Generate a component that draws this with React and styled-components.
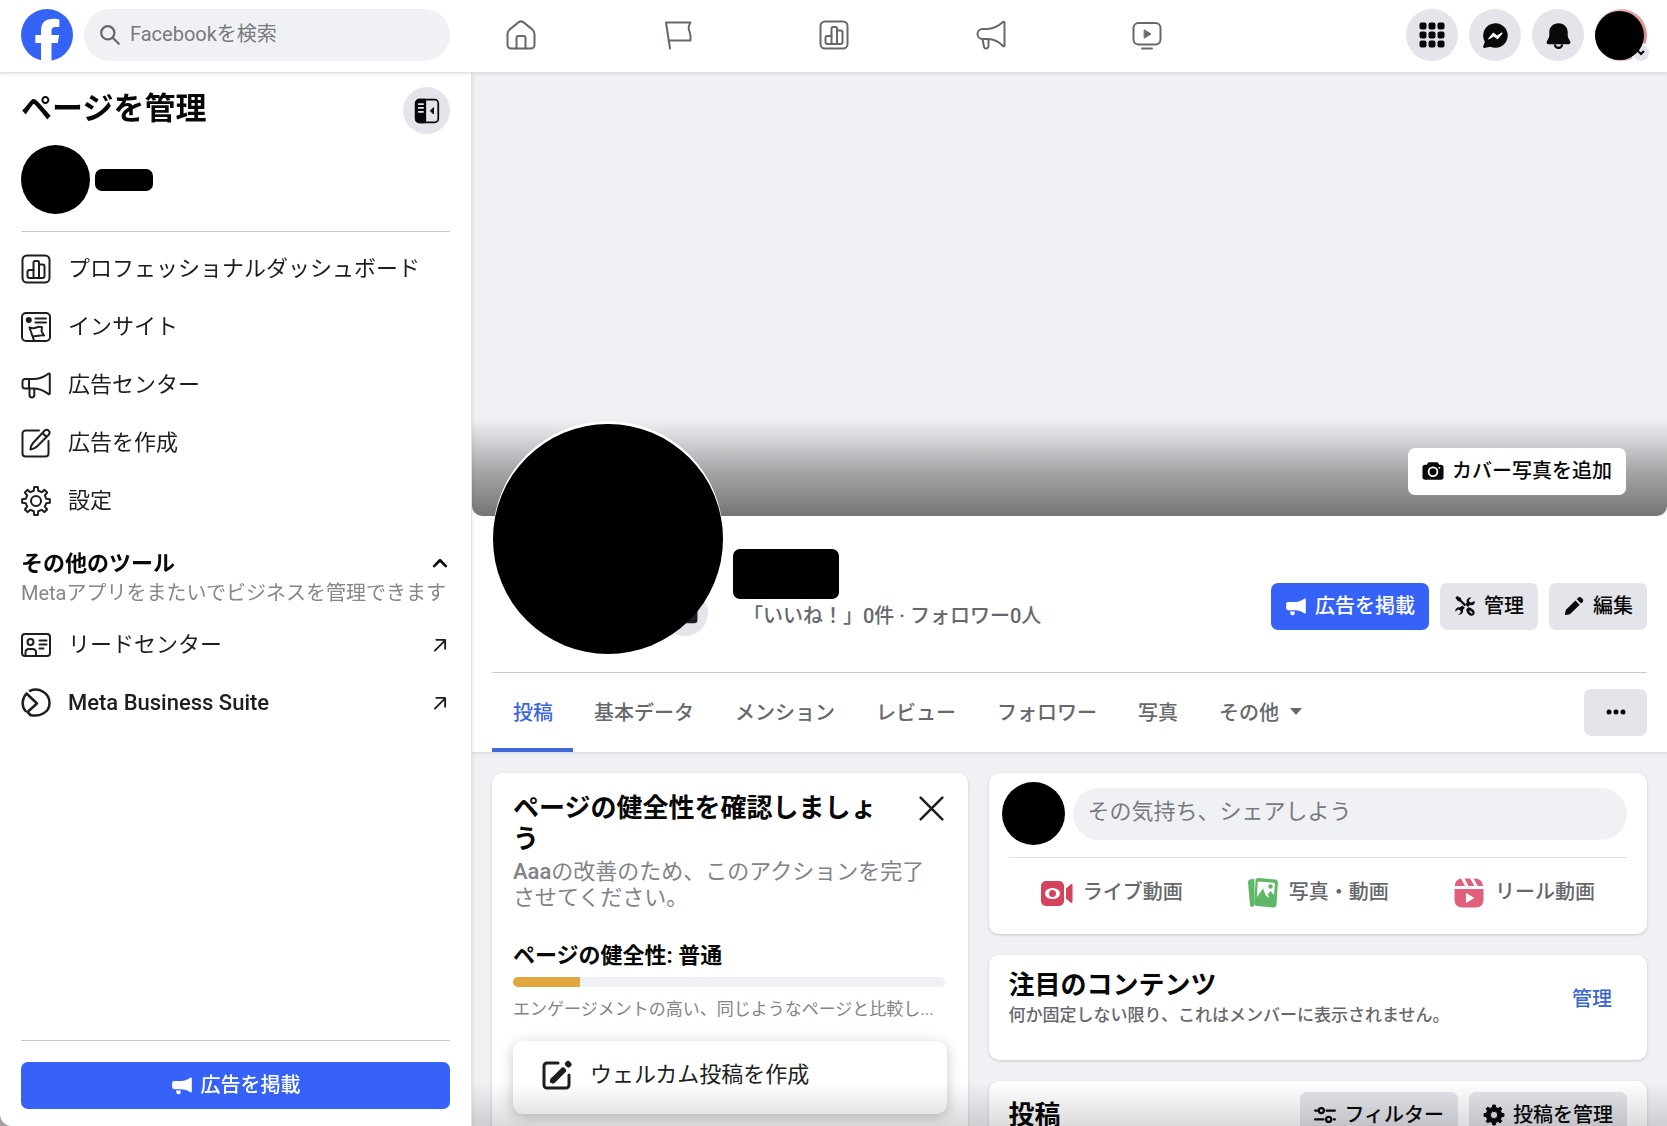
import React from 'react'
import styled, { createGlobalStyle } from 'styled-components'

const GlobalStyle = createGlobalStyle`
  * {
    box-sizing: border-box;
  }

  html {
    background: #a79f9b;
  }

  body {
    margin: 0;
    font-family: Roboto, "Noto Sans CJK JP", sans-serif;
    font-size: 20px;
    color: #080809;
  }

  button, input {
    font: inherit;
    color: inherit;
  }

  button {
    border: 0;
    padding: 0;
    background: none;
    cursor: pointer;
  }

  a {
    color: inherit;
    text-decoration: none;
  }

  h1, h2, h3, p, ul {
    margin: 0;
    padding: 0;
    font-weight: inherit;
  }

  svg {
    display: block;
    flex: none;
  }
`

/* ---------- Icons ---------- */

const Line = ({ size = 30, width = 2, children }) => (
    <svg width={size} height={size} viewBox="0 0 30 30" fill="none" stroke="currentColor" strokeWidth={width} strokeLinecap="round" strokeLinejoin="round" aria-hidden="true">
        {children}
    </svg>
)

const Solid = ({ size = 22, children }) => (
    <svg width={size} height={size} viewBox="0 0 24 24" fill="currentColor" aria-hidden="true">
        {children}
    </svg>
)

// outline of a cog, centred on c
const gear = (c, outer, inner, teeth = 8) => {
    const step = (Math.PI * 2) / teeth
    const points = []
    for (let i = 0; i < teeth; i++) {
        const a = i * step - Math.PI / 2
        const corners = [[inner, -0.27], [outer, -0.17], [outer, 0.17], [inner, 0.27]]
        corners.forEach(([r, t]) => {
            points.push(`${(c + r * Math.cos(a + t * step)).toFixed(2)} ${(c + r * Math.sin(a + t * step)).toFixed(2)}`)
        })
    }
    return `M${points.join('L')}Z`
}

const FacebookLogo = () => (
    <svg width="52" height="52" viewBox="0 0 52 52" aria-hidden="true">
        <circle cx="26" cy="26" r="26" fill="#3563f6" />
        <path fill="#fff" d="M20 52V34h-5.700V26H20v-3.500C20 13.500 24 9.800 32.500 9.800c2 0 4.500.2 5.800.7V18c-.8-.1-2-.1-3.500-.1-3.600 0-4.300 1.500-4.300 4.800V26h7.700l-1.500 8h-6.200v18z" />
    </svg>
)

const SearchIcon = () => (
    <Line size={22} width={3}>
        <circle cx="12" cy="12" r="9" />
        <path d="M19 19l8 8" />
    </Line>
)

const HomeIcon = () => (
    <Line>
        <path d="M1.500 14c0-2 .8-3.400 2.200-4.600l8.700-7c1.600-1.300 3.600-1.300 5.200 0l8.700 7c1.400 1.200 2.200 2.600 2.200 4.600v11a3.500 3.500 0 0 1-3.500 3.500H5A3.500 3.500 0 0 1 1.500 25z" />
        <path d="M10.500 28.500V18a2 2 0 0 1 2-2h5a2 2 0 0 1 2 2v10.500" />
    </Line>
)

const FlagIcon = () => (
    <Line>
        <path d="M7 28.500L3 2.500h24.500c-2.200 3.200-2.500 5.500-1 9 1 2.800 1.600 5 1 9H5.800" />
    </Line>
)

const ChartIcon = () => (
    <Line>
        <rect x="1.500" y="1.500" width="27" height="27" rx="4.500" />
        <path d="M12.500 24H8.500a2 2 0 0 1-2-2v-4a2 2 0 0 1 2-2h4" />
        <path d="M12.500 24V8.500a1.500 1.500 0 0 1 1.500-1.500h2.500a1.500 1.500 0 0 1 1.500 1.500V24z" />
        <path d="M18 10.500h3.500a2 2 0 0 1 2 2V22a2 2 0 0 1-2 2H18" />
    </Line>
)

const MegaphoneIcon = ({ band }) => (
    <Line>
        {band ? (
            <>
                <path d="M4 9h8c6 0 11-2 15.300-5.300.8-.6 1.500-.3 1.500.7v18.800c0 1-.8 1.300-1.500.7C23 20.500 18 18.500 12 18.500H4A2.500 2.500 0 0 1 1.500 16v-4.500A2.500 2.500 0 0 1 4 9z" />
                <path d="M8 9v9.500M8.500 18.500V25a2.400 2.400 0 0 0 4.800 0v-6.300" />
            </>
        ) : (
            <>
                <path d="M6.500 9H11c7 0 12-3.500 16-7 .8-.6 1.500-.3 1.500.6v22.800c0 1-.8 1.300-1.500.6-3.500-3.500-8.500-7-15-7H6.500a5 5 0 0 1 0-10z" />
                <path d="M6.500 19l1.400 7.300a2.300 2.300 0 0 0 4.600-.3v-7" />
            </>
        )}
    </Line>
)

const VideoIcon = () => (
    <Line>
        <rect x="1.500" y="3" width="27" height="21.500" rx="5" />
        <path d="M10 28.500h10" />
        <path d="M12.500 10l6.500 4-6.500 4z" fill="currentColor" strokeWidth="1" />
    </Line>
)

const InsightIcon = () => (
    <Line>
        <rect x="1" y="1" width="28" height="28" rx="4" />
        <circle cx="7.800" cy="8" r="2" fill="currentColor" />
        <path d="M14.500 6.500H25M14.500 10.500H25M13 28.500L8.500 15.500c3 1 5 .8 7 0s3.500-1 5.500-.2l-.5 4 2.500 4.200c-4-1-7 1.500-11.500.5" />
    </Line>
)

const ComposeIcon = () => (
    <Line>
        <path d="M18 2.500H4.500a3 3 0 0 0-3 3v20a3 3 0 0 0 3 3h20a3 3 0 0 0 3-3V13" />
        <path d="M9.500 21.500c0-3 .8-4.500 2.500-6.500L23.500 2.800c1.200-1.200 3-1.200 4.200 0s1 2.800 0 4L16 18.500c-2 1.900-3.700 2.700-6.500 3zM21.500 5l4 4" />
    </Line>
)

const GearIcon = () => (
    <Line>
        <path d={gear(15, 14, 10.500)} />
        <circle cx="15" cy="15" r="5" />
    </Line>
)

const LeadIcon = () => (
    <Line>
        <rect x="1" y="4" width="28" height="22" rx="3" />
        <circle cx="9.500" cy="12" r="3" />
        <path d="M4.500 25.500v-3c0-2 1.500-3.500 3.500-3.500h3.500c2 0 3.500 1.500 3.500 3.500v3M18.500 10.500h7M18.500 14.500h7M18.500 18.500h4" />
    </Line>
)

const SuiteIcon = () => (
    <Line width={2.500}>
        <path d="M9 2.800C18 -1 28.500 5 28.500 15S18 29 9.500 27" />
        <path d="M9.500 27l-3-3L16 15.500 5.500 5.500C.5 11 .5 18.500 4.500 23" />
    </Line>
)

const PanelIcon = () => (
    <Line size={26} width={2}>
        <rect x="2" y="2" width="26" height="26" rx="4" />
        <path d="M13 2H6a4 4 0 0 0-4 4v18a4 4 0 0 0 4 4h7z" fill="currentColor" />
        <path d="M5.500 7h5M5.500 11.500h5M5.500 16h5" stroke="#e4e6eb" />
        <path d="M22.500 11.500v7l-3.500-3.500z" fill="currentColor" strokeWidth="1" />
    </Line>
)

const ArrowIcon = () => (
    <Line size={14} width={4}>
        <path d="M4 27L26 5M7 4h19v19" />
    </Line>
)

const ChevronUp = () => (
    <Line size={16} width={5}>
        <path d="M4 19L15 8l11 11" />
    </Line>
)

const CloseIcon = () => (
    <Line size={25} width={3}>
        <path d="M2 2l26 26M28 2L2 28" />
    </Line>
)

const MenuDots = () => (
    <svg width="26" height="26" viewBox="0 0 26 26" aria-hidden="true">
        {[0, 9, 18].map((y) => [0, 9, 18].map((x) => (
            <rect key={`${x}-${y}`} x={x + 0.500} y={y + 0.500} width="7" height="7" rx="2" fill="currentColor" />
        )))}
    </svg>
)

const MessengerIcon = () => (
    <Solid size={27}>
        <path d="M12 1a11 11 0 1 1-4.500 21.100L2 23c-.8.100-1.200-.5-.9-1.200L2.500 17.500A11 11 0 0 1 12 1z" />
        <path d="M6 15l4-5 3.300 2.600L17.800 9.800l-4 5-3.300-2.600z" fill="#fff" stroke="#fff" strokeLinejoin="round" />
    </Solid>
)

const BellIcon = () => (
    <Solid size={27}>
        <path d="M12 1c-5 0-8.200 3.600-8.200 8v3.200c0 .8-.3 1.700-.8 2.500l-1.400 2.600c-.6 1.200.2 2.400 1.500 2.400h17.800c1.300 0 2.100-1.200 1.500-2.400L21 14.700c-.5-.8-.8-1.700-.8-2.500V9c0-4.400-3.200-8-8.200-8z" />
        <path d="M8.800 20a3.200 3 0 0 0 6.400 0" fill="none" stroke="currentColor" strokeWidth="2" />
    </Solid>
)

const AdIcon = () => (
    <Solid>
        <path d="M3.500 7.500H11c4 0 7-1.200 10-3.400.8-.6 1.700-.1 1.700.8v14.200c0 .9-.9 1.400-1.700.8-3-2.200-6-3.400-10-3.400H3.500A2.300 2.300 0 0 1 1.200 14.200V9.800A2.300 2.300 0 0 1 3.500 7.500z" />
        <path d="M5.500 18h5v2.200a1.800 1.800 0 0 1-1.800 1.800H7.800a2 2 0 0 1-1.900-1.500z" />
    </Solid>
)

const CameraIcon = ({ size }) => (
    <Solid size={size}>
        <path fillRule="evenodd" d="M8 2.500h8c1 0 1.600.5 2 1.300l.7 1.400h1.800A3 3 0 0 1 23.500 8.200v10.300a3 3 0 0 1-3 3h-17a3 3 0 0 1-3-3V8.200a3 3 0 0 1 3-3h1.800L6 3.800c.4-.8 1-1.300 2-1.300zM12 7a5.800 5.800 0 1 0 0 11.600A5.800 5.800 0 0 0 12 7zm0 2a3.800 3.800 0 1 1 0 7.600A3.800 3.800 0 0 1 12 9zm7-1.500a1 1 0 1 0 0 2 1 1 0 0 0 0-2z" />
    </Solid>
)

const ToolsIcon = () => (
    <Solid>
        <path d="M1.500 3l2-2 4 2.200.8 2.400 5 5-1.700 1.700-5-5-2.500-.8z" />
        <path d="M22.700 6.500c.5 3.500-2.500 5.500-5.500 4.600l-2 2-3-3 1.800-1.800c-1-3.300 1.500-6.300 5-5.600l-2.700 2.800.5 2.200 2.200.6z" />
        <path d="M1.500 18c-.5-3.500 2.500-5.300 5.300-4.600l2.400-2 2.600 2.600-2 2.200c.8 3.200-1.800 5.800-5 5.300l2.700-2.700-.7-2.200-2.300-.8z" />
        <path fillRule="evenodd" d="M13.500 15.500l2.200-2.200c2 .2 3.500 1 5 2.500 2 2 2.500 4 1 5.700s-4 1.300-6-.6c-1.500-1.500-2.300-3.200-2.200-5.400zm4 1l3 3.200-1 .9-3-3z" />
    </Solid>
)

const PencilIcon = () => (
    <Solid>
        <path d="M3 21.800c-.6.100-1-.3-.9-.9l.9-4.500L13.500 6l4.700 4.700L7.600 21.100z" />
        <path d="M15 4.600l1.300-1.300c1.300-1.300 2.800-1.300 4-.1l.9.9c1.200 1.200 1.200 2.700-.1 4l-1.300 1.300z" />
    </Solid>
)

const WelcomeIcon = () => (
    <Line width={3}>
        <path d="M16 3H5a3 3 0 0 0-3 3v19a3 3 0 0 0 3 3h19a3 3 0 0 0 3-3V15" />
        <path d="M11 20.500L21 10.500" strokeWidth="6" />
        <path d="M9 22l1.500-4 2.500 2.500z" fill="currentColor" strokeWidth="2" />
        <path d="M26 4l.5.5" strokeWidth="6" />
    </Line>
)

const FilterIcon = () => (
    <Line size={22} width={3}>
        <circle cx="10" cy="9" r="3.500" />
        <circle cx="20" cy="21" r="3.500" />
        <path d="M1.500 9h3M17 9h11.500M1.500 21H13M27 21h1.500" />
    </Line>
)

const GearSolid = () => (
    <Solid>
        <path fillRule="evenodd" stroke="currentColor" strokeLinejoin="round" d={`${gear(12, 11, 8.500)}M12 8a4 4 0 1 0 0 8 4 4 0 0 0 0-8z`} />
    </Solid>
)

const LiveIcon = () => (
    <svg width="32" height="32" viewBox="0 0 32 32" fill="#d5435b" aria-hidden="true">
        <rect x="0" y="4" width="23" height="25" rx="5" />
        <path d="M25 11.500l4.500-4c1-.8 2-.3 2 1v16c0 1.300-1 1.800-2 1l-4.500-4z" />
        <ellipse cx="11.500" cy="16.500" rx="7.500" ry="5.500" fill="#fff" />
        <circle cx="11.500" cy="16.500" r="3.500" />
    </svg>
)

const PhotoIcon = () => (
    <svg width="32" height="32" viewBox="0 0 32 32" fill="#5fb868" aria-hidden="true">
        <path d="M1 5.500C1 3.500 2 2.500 4 2.300L7.500 2v26.500l-1.800 1.300c-1.500.5-2.500 0-2.700-2z" />
        <path d="M11.500 1l16.500 1.500c2 .2 3 1.200 2.900 3.200L29.500 27.500c-.2 2-1.200 3-3.200 2.900L10 29c-2-.2-2.800-1.200-2.700-3.200L8.500 4c.1-2 1-3.100 3-3z" />
        <path d="M11.500 4.500l15 1.200c1 .1 1.400.6 1.300 1.600L27 18l-3.500-4-2.700 3.500 1.500 3.500-3.500-2.500L16 11.500 10 20l.6-14.500c0-.7.3-1 .9-1z" fill="#fff" />
        <circle cx="23.500" cy="9.500" r="2.200" />
    </svg>
)

const ReelIcon = () => (
    <svg width="32" height="32" viewBox="0 0 32 32" fill="#e0607c" aria-hidden="true">
        <path d="M2 9c0-4.500 2.500-7 6-7.500L12 9zM11.500 1.500h5.500L21.500 9h-6zM20.500 1.500h2c4.500.5 7 3 7.500 7.500h-5.200z" />
        <path fillRule="evenodd" d="M1.500 12h29v10.500c0 5-3 8-8 8h-13c-5 0-8-3-8-8zM13 16v10l8.500-5z" />
    </svg>
)

/* ---------- Shell ---------- */

const Window = styled.div`
    height: 100vh;
    display: flex;
    flex-direction: column;
    overflow: hidden;
    background: #fff;
    border-bottom-left-radius: 12px;
`

const Header = styled.header`
    position: relative;
    z-index: 3;
    display: grid;
    grid-template-columns: 1fr minmax(0, 656px) 1fr;
    align-items: center;
    height: 73px;
    padding: 0 20px 2px 21px;
    flex: none;
    background: #fff;
    border-bottom: 1px solid #dfe1e4;
    box-shadow: 0 1px 3px rgba(0, 0, 0, 0.1);
`

const Brand = styled.div`
    display: flex;
    align-items: center;
    gap: 11px;
`

const SearchBox = styled.label`
    display: flex;
    align-items: center;
    gap: 8px;
    width: 366px;
    height: 52px;
    padding: 0 15px;
    border-radius: 26px;
    background: #f0f1f5;
    color: #65686c;
`

const SearchInput = styled.input`
    flex: 1;
    min-width: 0;
    border: 0;
    outline: 0;
    padding: 0 0 2px 1px;
    background: none;

    &::placeholder {
        color: #777a7e;
        opacity: 1;
    }
`

const TopNav = styled.nav`
    display: flex;
    justify-content: space-between;
    color: #65686c;
`

const HeaderTools = styled.div`
    display: flex;
    justify-content: flex-end;
    gap: 11px;
`

const RoundButton = styled.button`
    display: flex;
    align-items: center;
    justify-content: center;
    width: ${(p) => p.$size || 52}px;
    height: ${(p) => p.$size || 52}px;
    border-radius: 50%;
    background: #e4e5eb;
    flex: none;
`

const AccountButton = styled(RoundButton)`
    position: relative;
    justify-content: flex-start;
    background: linear-gradient(100deg, #f3d4d1, #d88a86);
`

const AccountBadge = styled.span`
    position: absolute;
    right: -2px;
    bottom: 0;
    display: flex;
    align-items: flex-end;
    justify-content: center;
    width: 16px;
    height: 16px;
    padding-bottom: 5px;
    border-radius: 50%;
    background: #e4e5eb;
    box-shadow: 0 0 0 2px #fff;
`

const Avatar = styled.span`
    position: relative;
    width: ${(p) => p.$size}px;
    height: ${(p) => p.$size}px;
    border-radius: 50%;
    background: #000;
    flex: none;
`

const Redacted = styled.span`
    display: block;
    width: ${(p) => p.$w}px;
    height: ${(p) => p.$h}px;
    border-radius: 7px;
    background: #000;
`

const Body = styled.div`
    display: flex;
    flex: 1;
    min-height: 0;
`

/* ---------- Sidebar ---------- */

const Sidebar = styled.aside`
    position: relative;
    z-index: 2;
    display: flex;
    flex-direction: column;
    width: 472px;
    flex: none;
    padding: 14px 21px 17px;
    border-right: 1px solid #dfe1e4;
    box-shadow: 1px 0 3px rgba(0, 0, 0, 0.08);
`

const SidebarHead = styled.div`
    display: flex;
    align-items: center;
    justify-content: space-between;
`

const PageTitle = styled.h1`
    padding-bottom: 3px;
    font-size: 31px;
    line-height: 44px;
    font-weight: 700;
`

const PageOwner = styled.div`
    display: flex;
    align-items: center;
    gap: 5px;
    margin-top: 11px;
    padding-bottom: 17px;
    border-bottom: 1px solid #c9ccd1;
`

const MenuList = styled.ul`
    list-style: none;
    padding-top: ${(p) => p.$top}px;
`

const MenuLink = styled.a`
    display: flex;
    align-items: center;
    gap: 17px;
    height: 58px;
    padding-right: 3px;
    font-size: 22px;
    line-height: 30px;
    color: #1c1e21;

    span {
        flex: 1;
        padding-bottom: 1px;
        font-weight: ${(p) => (p.$latin ? 500 : 400)};
    }
`

const ToolsToggle = styled.button`
    display: flex;
    align-items: center;
    justify-content: space-between;
    margin-top: 20px;
    padding-right: 2px;
    font-size: 22px;
    line-height: 28px;
    font-weight: 700;
`

const ToolsNote = styled.p`
    margin-top: 2px;
    line-height: 26px;
    white-space: nowrap;
    color: #85878b;
`

const SidebarFoot = styled.div`
    margin-top: auto;
    padding-top: 21px;
    border-top: 1px solid #c9ccd1;
`

const Button = styled.button`
    display: flex;
    align-items: center;
    justify-content: center;
    gap: 8px;
    width: ${(p) => (p.$wide ? '100%' : 'auto')};
    height: 47px;
    padding: 0 14px 2px;
    border-radius: 7px;
    line-height: 26px;
    font-weight: 500;
    white-space: nowrap;
    color: ${(p) => (p.$primary ? '#fff' : '#080809')};
    background: ${(p) => (p.$primary ? '#3662f8' : p.$white ? '#fff' : '#e4e5eb')};
`

/* ---------- Page header ---------- */

const Main = styled.main`
    position: relative;
    flex: 1;
    min-width: 0;
    overflow-y: auto;
    scrollbar-width: none;
    background: #f0f1f5;
`

const PageHead = styled.section`
    background: #fff;
    border-bottom: 1px solid #dfe1e4;
    box-shadow: 0 1px 2px rgba(0, 0, 0, 0.08);
`

const Cover = styled.div`
    display: flex;
    align-items: flex-end;
    justify-content: flex-end;
    height: 443px;
    padding: 21px 41px;
    border-radius: 0 0 10px 10px;
    background: linear-gradient(to top, #767475, #a5a6a8 45px, #d8d9dc 80px, #f0f1f5 98px);
`

const Profile = styled.div`
    display: flex;
    align-items: flex-start;
    gap: 10px;
    margin: 0 20px;
    padding-bottom: 18px;
    border-bottom: 1px solid #c9ccd1;
`

const Portrait = styled.div`
    position: relative;
    margin-top: -92px;
    margin-left: 1px;
    flex: none;
    display: flex;

    ${Avatar} {
        box-shadow: 0 -3px 0 #fff;
    }
`

const PortraitButton = styled(RoundButton)`
    position: absolute;
    right: 15px;
    bottom: 18px;
    color: #1c1e21;
`

const ProfileText = styled.div`
    flex: 1;
    padding-top: 33px;
`

const Stats = styled.p`
    margin-top: 4px;
    padding-left: 10px;
    line-height: 26px;
    font-weight: 500;
    color: #65686c;
`

const Actions = styled.div`
    display: flex;
    gap: 11px;
    padding-top: ${(p) => p.$top || 0}px;
`

const TabBar = styled.nav`
    display: flex;
    align-items: stretch;
    height: 79px;
    margin: 0 20px;
`

const Tab = styled.a`
    display: flex;
    align-items: center;
    gap: 11px;
    padding: 0 20px 2px 21px;
    border-top: 4px solid transparent;
    border-bottom: 4px solid ${(p) => (p.$active ? '#4267d8' : 'transparent')};
    font-weight: 500;
    white-space: nowrap;
    color: ${(p) => (p.$active ? '#3b66dd' : '#65686c')};
`

const MoreButton = styled(Button)`
    width: 63px;
    margin: auto 0 auto auto;
`

const Caret = styled.span`
    width: 0;
    border: 6px solid transparent;
    border-top: 7px solid #65686c;
    border-bottom: 0;
`

/* ---------- Feed ---------- */

const Feed = styled.div`
    display: grid;
    grid-template-columns: 476fr 659fr;
    align-items: start;
    gap: 21px;
    padding: 20px;
`

const Column = styled.div`
    display: flex;
    flex-direction: column;
    gap: 21px;
    min-width: 0;
`

const Card = styled.section`
    padding: ${(p) => p.$pad || '20px'};
    border-radius: 10px;
    background: #fff;
    box-shadow: 0 1px 3px rgba(0, 0, 0, 0.18);
`

const CardHead = styled.div`
    display: flex;
    align-items: ${(p) => (p.$top ? 'flex-start' : 'center')};
    justify-content: space-between;
    gap: 20px;
`

const CardTitle = styled.h2`
    font-size: 26px;
    line-height: 31px;
    font-weight: 700;
`

const CloseButton = styled.button`
    padding: 3px 3px 0 0;
    color: #1c1e21;
`

const HealthText = styled.p`
    margin-top: 4px;
    padding-right: 10px;
    font-size: 22px;
    line-height: 26px;
    color: #808387;

    b {
        font-weight: 500;
    }
`

const HealthLevel = styled.h3`
    margin-top: 30px;
    font-size: 22px;
    line-height: 30px;
    font-weight: 700;
`

const Meter = styled.div`
    height: 10px;
    margin: 6px 2px 0 0;
    overflow: hidden;
    border-radius: 5px;
    background: #f0f1f5;
`

const MeterFill = styled.div`
    height: 100%;
    background: #e2a63f;
`

const HealthNote = styled.p`
    margin-top: 10px;
    font-size: 17px;
    line-height: 24px;
    white-space: nowrap;
    color: #808387;
`

const TaskButton = styled.button`
    display: flex;
    align-items: center;
    gap: 18px;
    width: 100%;
    height: 73px;
    margin: 20px 0 40px;
    padding: 0 29px 6px;
    border-radius: 10px;
    background: #fff;
    box-shadow: 0 3px 14px rgba(0, 0, 0, 0.22);
    font-size: 22px;
    line-height: 28px;
    color: #1c1e21;
`

const Composer = styled.div`
    display: flex;
    align-items: center;
    gap: 8px;
    margin-left: -7px;
    padding-bottom: 12px;
`

const ComposerInput = styled.input`
    flex: 1;
    min-width: 0;
    height: 52px;
    padding: 0 15px 4px;
    border: 0;
    border-radius: 26px;
    background: #f0f1f5;
    font-size: 22px;

    &::placeholder {
        color: #777a7e;
        opacity: 1;
    }
`

const PostKinds = styled.div`
    display: grid;
    grid-template-columns: repeat(3, 1fr);
    padding-top: 10px;
    border-top: 1px solid #dfe1e4;
`

const PostKind = styled.button`
    display: flex;
    align-items: center;
    justify-content: center;
    gap: 10px;
    height: 52px;
    padding-bottom: 2px;
    line-height: 26px;
    font-weight: 500;
    color: #65686c;

    span {
        padding-bottom: 2px;
    }
`

const PinNote = styled.p`
    font-size: 17px;
    line-height: 28px;
    font-weight: 500;
    color: #65686c;
`

const PinManage = styled.a`
    padding: 0 15px 2px 0;
    line-height: 26px;
    font-weight: 500;
    color: #3b66cf;
`

const BottomShade = styled.div`
    position: fixed;
    left: 472px;
    right: 0;
    bottom: 0;
    height: 44px;
    pointer-events: none;
    background: linear-gradient(to top, rgba(0, 0, 0, 0.14), rgba(0, 0, 0, 0));
`

const navItems = [
    { label: 'ホーム', icon: <HomeIcon /> },
    { label: 'ページ', icon: <FlagIcon /> },
    { label: 'ダッシュボード', icon: <ChartIcon /> },
    { label: '広告', icon: <MegaphoneIcon /> },
    { label: '動画', icon: <VideoIcon /> },
]

const menuItems = [
    { label: 'プロフェッショナルダッシュボード', icon: <ChartIcon /> },
    { label: 'インサイト', icon: <InsightIcon /> },
    { label: '広告センター', icon: <MegaphoneIcon band /> },
    { label: '広告を作成', icon: <ComposeIcon /> },
    { label: '設定', icon: <GearIcon /> },
]

const tabs = ['投稿', '基本データ', 'メンション', 'レビュー', 'フォロワー', '写真']

const postKinds = [
    { label: 'ライブ動画', icon: <LiveIcon /> },
    { label: '写真・動画', icon: <PhotoIcon /> },
    { label: 'リール動画', icon: <ReelIcon /> },
]

const health = 15.5

const App = () => {
    return (
        <Window>
            <GlobalStyle />

            <Header>
                <Brand>
                    <a href="#" aria-label="Facebook"><FacebookLogo /></a>
                    <SearchBox>
                        <SearchIcon />
                        <SearchInput type="search" placeholder="Facebookを検索" aria-label="Facebookを検索" />
                    </SearchBox>
                </Brand>
                <TopNav>
                    {navItems.map((item) => (
                        <a key={item.label} href="#" aria-label={item.label}>{item.icon}</a>
                    ))}
                </TopNav>
                <HeaderTools>
                    <RoundButton aria-label="メニュー"><MenuDots /></RoundButton>
                    <RoundButton aria-label="Messenger"><MessengerIcon /></RoundButton>
                    <RoundButton aria-label="お知らせ"><BellIcon /></RoundButton>
                    <AccountButton aria-label="アカウント">
                        <AccountBadge>
                            <svg width="8" height="6" viewBox="0 0 8 6" fill="none" stroke="#080809" strokeWidth="2"><path d="M1 1l3 3 3-3" /></svg>
                        </AccountBadge>
                        <Avatar $size={49} />
                    </AccountButton>
                </HeaderTools>
            </Header>

            <Body>
                <Sidebar>
                    <SidebarHead>
                        <PageTitle>ページを管理</PageTitle>
                        <RoundButton $size={47} aria-label="サイドバーを閉じる"><PanelIcon /></RoundButton>
                    </SidebarHead>
                    <PageOwner>
                        <Avatar $size={69} />
                        <Redacted $w={58} $h={22} />
                    </PageOwner>

                    <MenuList $top={8}>
                        {menuItems.map((item) => (
                            <li key={item.label}>
                                <MenuLink href="#">{item.icon}<span>{item.label}</span></MenuLink>
                            </li>
                        ))}
                    </MenuList>

                    <ToolsToggle aria-expanded="true">その他のツール<ChevronUp /></ToolsToggle>
                    <ToolsNote>Metaアプリをまたいでビジネスを管理できます</ToolsNote>
                    <MenuList $top={10}>
                        <li><MenuLink href="#"><LeadIcon /><span>リードセンター</span><ArrowIcon /></MenuLink></li>
                        <li><MenuLink href="#" $latin><SuiteIcon /><span>Meta Business Suite</span><ArrowIcon /></MenuLink></li>
                    </MenuList>

                    <SidebarFoot>
                        <Button $primary $wide><AdIcon />広告を掲載</Button>
                    </SidebarFoot>
                </Sidebar>

                <Main>
                    <PageHead>
                        <Cover>
                            <Button $white><CameraIcon />カバー写真を追加</Button>
                        </Cover>
                        <Profile>
                            <Portrait>
                                <PortraitButton $size={46} aria-label="プロフィール写真を変更"><CameraIcon size={26} /></PortraitButton>
                                <Avatar $size={230} />
                            </Portrait>
                            <ProfileText>
                                <Redacted $w={106} $h={50} />
                                <Stats>「いいね！」0件 · フォロワー0人</Stats>
                            </ProfileText>
                            <Actions $top={67}>
                                <Button $primary><AdIcon />広告を掲載</Button>
                                <Button><ToolsIcon />管理</Button>
                                <Button><PencilIcon />編集</Button>
                            </Actions>
                        </Profile>
                        <TabBar>
                            {tabs.map((tab, i) => (
                                <Tab key={tab} href="#" $active={i === 0}>{tab}</Tab>
                            ))}
                            <Tab href="#">その他<Caret /></Tab>
                            <MoreButton aria-label="その他の操作">
                                <svg width="20" height="6" viewBox="0 0 20 6" fill="currentColor">
                                    <circle cx="3" cy="3" r="2.500" />
                                    <circle cx="10" cy="3" r="2.500" />
                                    <circle cx="17" cy="3" r="2.500" />
                                </svg>
                            </MoreButton>
                        </TabBar>
                    </PageHead>

                    <Feed>
                        <Column>
                            <Card $pad="20px 21px">
                                <CardHead $top>
                                    <CardTitle>ページの健全性を確認しましょう</CardTitle>
                                    <CloseButton aria-label="閉じる"><CloseIcon /></CloseButton>
                                </CardHead>
                                <HealthText><b>Aaa</b>の改善のため、このアクションを完了させてください。</HealthText>
                                <HealthLevel>ページの健全性: 普通</HealthLevel>
                                <Meter><MeterFill style={{ width: `${health}%` }} /></Meter>
                                <HealthNote>エンゲージメントの高い、同じようなページと比較し...</HealthNote>
                                <TaskButton><WelcomeIcon />ウェルカム投稿を作成</TaskButton>
                            </Card>
                        </Column>

                        <Column>
                            <Card $pad="9px 20px 14px">
                                <Composer>
                                    <Avatar $size={63} />
                                    <ComposerInput placeholder="その気持ち、シェアしよう" aria-label="その気持ち、シェアしよう" />
                                </Composer>
                                <PostKinds>
                                    {postKinds.map((kind) => (
                                        <PostKind key={kind.label}>{kind.icon}<span>{kind.label}</span></PostKind>
                                    ))}
                                </PostKinds>
                            </Card>
                            <Card $pad="15px 20px 31px">
                                <CardHead>
                                    <div>
                                        <CardTitle>注目のコンテンツ</CardTitle>
                                        <PinNote>何か固定しない限り、これはメンバーに表示されません。</PinNote>
                                    </div>
                                    <PinManage href="#">管理</PinManage>
                                </CardHead>
                            </Card>
                            <Card $pad="11px 20px">
                                <CardHead>
                                    <CardTitle>投稿</CardTitle>
                                    <Actions>
                                        <Button><FilterIcon />フィルター</Button>
                                        <Button><GearSolid />投稿を管理</Button>
                                    </Actions>
                                </CardHead>
                            </Card>
                        </Column>
                    </Feed>
                    <BottomShade />
                </Main>
            </Body>
        </Window>
    )
}

export default App
